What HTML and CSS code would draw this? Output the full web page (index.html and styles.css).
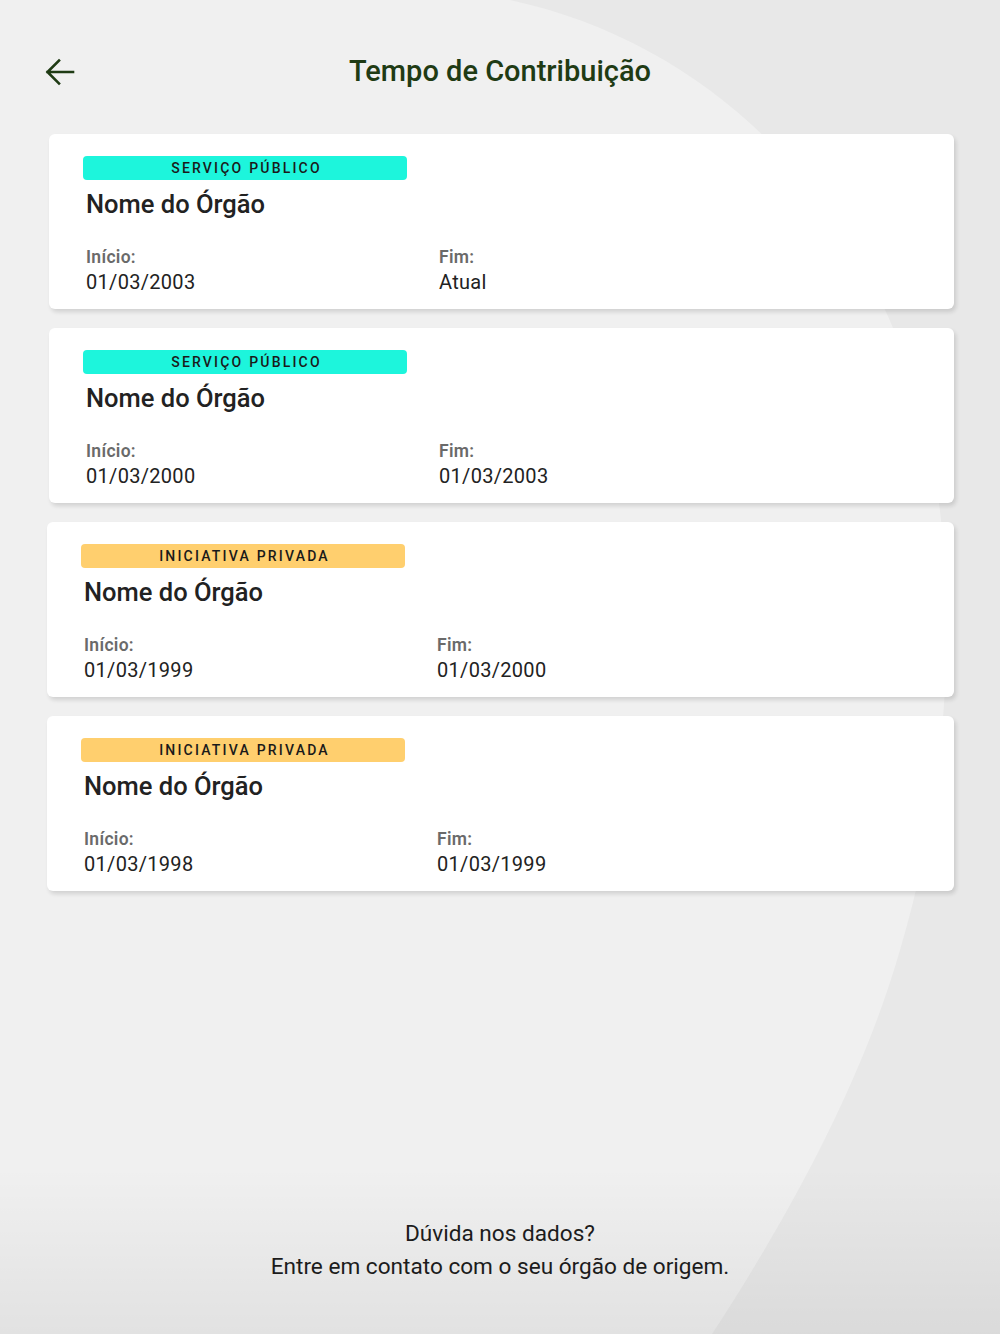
FILE: index.html
```html
<!DOCTYPE html>
<html lang="pt-BR">
<head>
<meta charset="utf-8">
<title>Tempo de Contribuição</title>
<link rel="stylesheet" href="styles.css">
</head>
<body>
<svg class="bg-shape" width="1000" height="1334" viewBox="0 0 1000 1334" aria-hidden="true">
  <path d="M0 0 L510 0 C 740 50 895 240 934 470 C 960 620 945 800 900 950 C 860 1090 780 1230 712 1334 L0 1334 Z" fill="#f0f0f0"/>
</svg>
<div class="page">
  <header class="header">
    <button class="back" aria-label="Voltar">
      <svg width="32" height="28" viewBox="0 0 32 28"><path d="M29 14 H3.5 M15 2.5 L3.5 14 L15 25.5" fill="none" stroke="#1f3b14" stroke-width="2.6" stroke-linecap="square"/></svg>
    </button>
    <h1 class="title">Tempo de Contribuição</h1>
    <span></span>
  </header>

  <main class="cards">
    <section class="card">
      <div class="tag tag-publico">SERVIÇO PÚBLICO</div>
      <h2 class="orgao">Nome do Órgão</h2>
      <div class="dates">
        <div><div class="label">Início:</div><div class="value">01/03/2003</div></div>
        <div><div class="label">Fim:</div><div class="value">Atual</div></div>
      </div>
    </section>
    <section class="card">
      <div class="tag tag-publico">SERVIÇO PÚBLICO</div>
      <h2 class="orgao">Nome do Órgão</h2>
      <div class="dates">
        <div><div class="label">Início:</div><div class="value">01/03/2000</div></div>
        <div><div class="label">Fim:</div><div class="value">01/03/2003</div></div>
      </div>
    </section>
    <section class="card card-wide">
      <div class="tag tag-privada">INICIATIVA PRIVADA</div>
      <h2 class="orgao">Nome do Órgão</h2>
      <div class="dates">
        <div><div class="label">Início:</div><div class="value">01/03/1999</div></div>
        <div><div class="label">Fim:</div><div class="value">01/03/2000</div></div>
      </div>
    </section>
    <section class="card card-wide">
      <div class="tag tag-privada">INICIATIVA PRIVADA</div>
      <h2 class="orgao">Nome do Órgão</h2>
      <div class="dates">
        <div><div class="label">Início:</div><div class="value">01/03/1998</div></div>
        <div><div class="label">Fim:</div><div class="value">01/03/1999</div></div>
      </div>
    </section>
  </main>

  <footer class="footer">
    <p>Dúvida nos dados?</p>
    <p>Entre em contato com o seu órgão de origem.</p>
  </footer>
</div>
</body>
</html>
```
FILE: styles.css
```css
* { box-sizing: border-box; }
html, body {
  margin: 0;
  padding: 0;
}
body {
  width: 1000px;
  height: 1334px;
  overflow: hidden;
  position: relative;
  background: #e8e8e8;
  font-family: Roboto, "Noto Sans", "Liberation Sans", sans-serif;
  color: #1f1f1f;
}
.bg-shape {
  position: absolute;
  left: 0;
  top: 0;
  z-index: 0;
}
.page {
  position: relative;
  z-index: 1;
  height: 1334px;
  display: flex;
  flex-direction: column;
}
.header {
  margin-top: 49px;
  height: 44px;
  padding: 0 44px;
  display: grid;
  grid-template-columns: 1fr auto 1fr;
  align-items: center;
}
.back {
  justify-self: start;
  background: none;
  border: 0;
  padding: 0;
  width: 32px;
  height: 28px;
  display: flex;
  margin-top: 2px;
}
.title {
  margin: 0;
  font-size: 29px;
  line-height: 44px;
  font-weight: 500;
  color: #1f3b14;
}
.cards {
  margin-top: 41px;
  padding: 0 46px 0 49px;
  display: flex;
  flex-direction: column;
  gap: 19px;
}
.card {
  height: 175px;
  background: #ffffff;
  border-radius: 6px;
  box-shadow: 2px 3px 4px rgba(0, 0, 0, 0.13);
  padding: 22px 34px 0 34px;
}
.card-wide {
  margin-left: -2px;
}
.tag {
  width: 324px;
  height: 24px;
  border-radius: 4px;
  display: flex;
  align-items: center;
  justify-content: center;
  font-size: 14px;
  font-weight: 500;
  letter-spacing: 2.2px;
  color: #1a1a1a;
  padding-left: 3px;
}
.tag-publico { background: #1df5dc; }
.tag-privada { background: #ffcf6e; }
.orgao {
  margin: 9px 0 0 3px;
  font-size: 25.5px;
  line-height: 30px;
  font-weight: 500;
  color: #222222;
}
.dates {
  margin-top: 28px;
  padding-left: 3px;
  display: grid;
  grid-template-columns: 353px 1fr;
}
.label {
  font-size: 17.5px;
  line-height: 20px;
  font-weight: 600;
  letter-spacing: 0.3px;
  color: #6a6a6a;
}
.value {
  margin-top: 3px;
  font-size: 20px;
  line-height: 24px;
  color: #222222;
  letter-spacing: 0.3px;
}
.footer {
  margin-top: auto;
  padding: 50px 0 51px;
  text-align: center;
  background: linear-gradient(rgba(0, 0, 0, 0), rgba(0, 0, 0, 0.06));
}
.footer p {
  margin: 0;
  font-size: 22.6px;
  line-height: 33px;
  color: #1c1c1c;
}
```
